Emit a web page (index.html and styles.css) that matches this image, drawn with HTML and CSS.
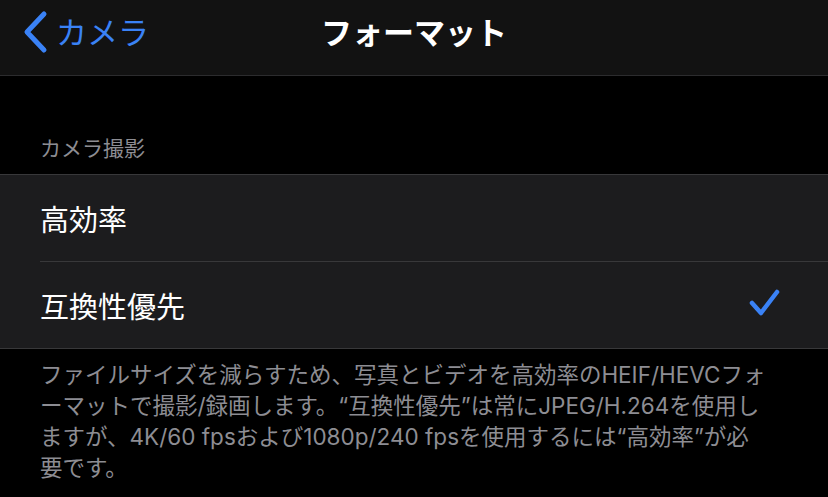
FILE: index.html
```html
<!DOCTYPE html>
<html lang="ja">

<head>
  <meta charset="UTF-8" />
  <meta name="viewport" content="width=device-width, initial-scale=1.0" />
  <title>フォーマット</title>
  <link rel="stylesheet" href="styles.css">
</head>

<body>
  <div class="nav">
    <a class="back" href="#">
      <svg class="chevron" width="28" height="44" viewBox="0 0 28 44">
        <path d="M23 4 L6 22 L23 40" fill="none" stroke="#3a82f6" stroke-width="5" stroke-linecap="round" stroke-linejoin="round" />
      </svg>
      <span>カメラ</span>
    </a>
    <h1 class="title">フォーマット</h1>
    <div></div>
  </div>

  <div class="section-header">カメラ撮影</div>

  <ul class="group">
    <li class="cell">
      <div class="cell-inner">高効率</div>
    </li>
    <li class="cell">
      <div class="cell-inner">
        互換性優先
        <svg class="check" width="34" height="32" viewBox="0 0 34 32">
          <path d="M4 15 L13 25 L29 4" fill="none" stroke="#3a82f6" stroke-width="4.5" stroke-linecap="round" stroke-linejoin="round" />
        </svg>
      </div>
    </li>
  </ul>

  <p class="footer">ファイルサイズを減らすため、写真とビデオを高効率のHEIF/HEVCフォーマットで撮影/録画します。“互換性優先”は常にJPEG/H.264を使用しますが、4K/60 fpsおよび1080p/240 fpsを使用するには“高効率”が必要です。</p>
</body>

</html>
```

FILE: styles.css
```css
/* Global Styles */
* {
  box-sizing: border-box;
  margin: 0;
  padding: 0;
}

body {
  background: #000000;
  color: #ffffff;
  font-family: "Noto Sans CJK JP", "Noto Sans", sans-serif;
  width: 828px;
  height: 497px;
  overflow: hidden;
}

/* Navigation Bar */
.nav {
  height: 76px;
  background: #121212;
  border-bottom: 1px solid #2c2c2e;
  display: grid;
  grid-template-columns: 1fr auto 1fr;
  align-items: center;
}

.back {
  display: flex;
  align-items: center;
  gap: 7px;
  padding-left: 21px;
  color: #3a82f6;
  text-decoration: none;
  font-size: 31px;
  margin-top: -12px;
}

.back span {
  margin-top: -2px;
}

.title {
  font-size: 31px;
  font-weight: 700;
  margin-top: -14px;
}

/* Section Header */
.section-header {
  height: 98px;
  padding: 0 40px 12px;
  display: flex;
  align-items: flex-end;
  color: #8d8d93;
  font-size: 21px;
}

/* Group */
.group {
  list-style: none;
  background: #1c1c1e;
  border-top: 1px solid #38383a;
  border-bottom: 1px solid #38383a;
}

.cell {
  padding-left: 40px;
}

.cell-inner {
  height: 87px;
  display: flex;
  align-items: center;
  justify-content: space-between;
  padding-right: 46px;
  font-size: 29px;
  border-bottom: 1px solid #38383a;
}

.cell:last-child .cell-inner {
  height: 86px;
  border-bottom: none;
}

.check {
  margin-top: -2px;
}

/* Footer */
.footer {
  padding: 10px 60px 0 40px;
  color: #8d8d93;
  font-family: "Inter", "Noto Sans CJK JP", sans-serif;
  font-size: 22.5px;
  line-height: 31px;
}
```
